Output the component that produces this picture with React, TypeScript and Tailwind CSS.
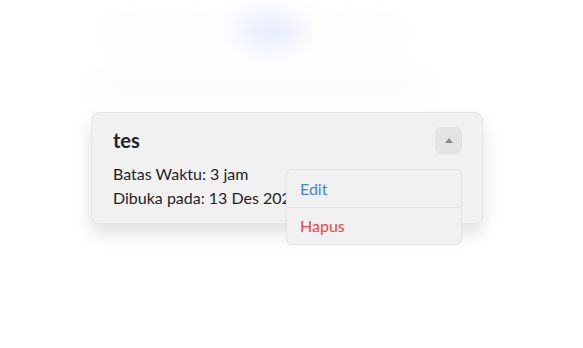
import { useState } from "react";

export default function App() {
  const [open, setOpen] = useState(true);

  return (
    <div className="w-[583px] h-[348px] bg-white overflow-hidden font-['Lato',sans-serif] text-[#1f2328]">
      {/* BLURRED BACKGROUND */}
      <div className="blur-[14px] pt-[18px] pl-[104px] opacity-60">
        <div className="flex items-center gap-[18px]">
          <div className="w-[120px] h-[16px] rounded bg-gray-100" />
          <div className="w-[56px] h-[26px] rounded-md bg-indigo-200" />
          <div className="w-[90px] h-[16px] rounded bg-gray-100" />
        </div>
        <div className="mt-[34px] -ml-[14px] w-[340px] h-[18px] rounded bg-gray-100" />
      </div>

      {/* CARD */}
      <div className="relative ml-[91px] mt-[16px] w-[392px] rounded-lg border border-[#e6e6e6] bg-[#f1f1f1] shadow-[0_10px_18px_rgba(0,0,0,0.12)] pl-[21px] pr-[20px] pt-[14px] pb-[13px]">
        <div className="flex items-center justify-between">
          <h1 className="text-[20px] font-bold leading-[27px]">tes</h1>
          <button
            onClick={() => setOpen(!open)}
            className="w-[27px] h-[27px] rounded-md bg-[#e4e4e4] flex items-center justify-center"
          >
            <svg width="8" height="5" viewBox="0 0 8 5">
              <path d="M4 0 L8 5 L0 5 Z" fill="#8a8a8a" />
            </svg>
          </button>
        </div>

        <div className="mt-[8px] text-[16px] leading-[24px]">
          <p>Batas Waktu: 3 jam</p>
          <p>Dibuka pada: 13 Des 2024</p>
        </div>

        {/* DROPDOWN */}
        {open && (
          <div className="absolute left-[194px] top-[56px] w-[176px] rounded-md border border-[#e2e2e2] bg-[#f1f1f1] text-[16px]">
            <button className="block w-full text-left px-[13px] h-[37px] text-[#4a7df0]">
              Edit
            </button>
            <div className="h-px bg-[#e2e2e2]" />
            <button className="block w-full text-left px-[13px] h-[36px] text-[#ef4444]">
              Hapus
            </button>
          </div>
        )}
      </div>
    </div>
  );
}
